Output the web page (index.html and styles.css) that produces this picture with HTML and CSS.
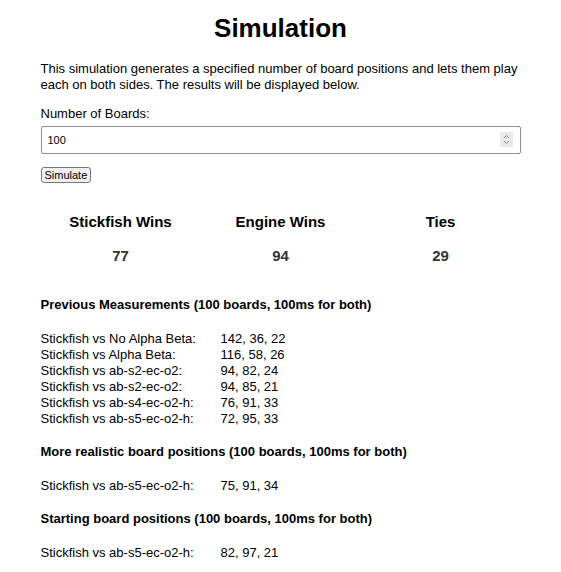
FILE: index.html
```html
<!DOCTYPE html>
<html>
<head>
<meta charset="utf-8">
<link rel="stylesheet" href="styles.css">
</head>
<body>
<main class="container">
  <h1 class="title">Simulation</h1>
  <p class="intro">This simulation generates a specified number of board positions and lets them play each on both sides. The results will be displayed below.</p>
  <label class="label" for="boards">Number of Boards:</label>
  <div class="input-wrap">
    <input id="boards" class="input" type="number" value="100">
    <span class="spinner" aria-hidden="true">
      <svg width="13" height="15" viewBox="0 0 13 15">
        <path d="M4 6 L6.5 3.5 L9 6" fill="none" stroke="#8a8a8a" stroke-width="1"/>
        <path d="M4 9 L6.5 11.5 L9 9" fill="none" stroke="#8a8a8a" stroke-width="1"/>
      </svg>
    </span>
  </div>
  <button class="btn">Simulate</button>

  <div class="stats">
    <div class="stat"><div class="stat-title">Stickfish Wins</div><div class="stat-value">77</div></div>
    <div class="stat"><div class="stat-title">Engine Wins</div><div class="stat-value">94</div></div>
    <div class="stat"><div class="stat-title">Ties</div><div class="stat-value">29</div></div>
  </div>

  <h3 class="section-title first">Previous Measurements (100 boards, 100ms for both)</h3>
  <div class="results">
    <div class="row"><span class="name">Stickfish vs No Alpha Beta:</span><span>142, 36, 22</span></div>
    <div class="row"><span class="name">Stickfish vs Alpha Beta:</span><span>116, 58, 26</span></div>
    <div class="row"><span class="name">Stickfish vs ab-s2-ec-o2:</span><span>94, 82, 24</span></div>
    <div class="row"><span class="name">Stickfish vs ab-s2-ec-o2:</span><span>94, 85, 21</span></div>
    <div class="row"><span class="name">Stickfish vs ab-s4-ec-o2-h:</span><span>76, 91, 33</span></div>
    <div class="row"><span class="name">Stickfish vs ab-s5-ec-o2-h:</span><span>72, 95, 33</span></div>
  </div>

  <h3 class="section-title">More realistic board positions (100 boards, 100ms for both)</h3>
  <div class="results">
    <div class="row"><span class="name">Stickfish vs ab-s5-ec-o2-h:</span><span>75, 91, 34</span></div>
  </div>

  <h3 class="section-title">Starting board positions (100 boards, 100ms for both)</h3>
  <div class="results">
    <div class="row"><span class="name">Stickfish vs ab-s5-ec-o2-h:</span><span>82, 97, 21</span></div>
  </div>
</main>
</body>
</html>
```

FILE: styles.css
```css
body {
  margin: 8px;
  font-family: "Liberation Sans", Arial, sans-serif;
  font-size: 13px;
  color: #000;
  background: #fff;
}
.container {
  max-width: 480px;
  margin: 0 auto;
}
.title {
  font-size: 26px;
  font-weight: bold;
  text-align: center;
  margin: 4px 0 17px;
  line-height: 32px;
}
.intro {
  margin: 0 0 13px;
  line-height: 16px;
}
.label {
  display: block;
  line-height: 16px;
  margin-bottom: 4px;
}
.input-wrap {
  position: relative;
  margin-bottom: 13px;
}
.input {
  display: block;
  box-sizing: border-box;
  width: 100%;
  height: 28px;
  border: 1px solid #8f8f9d;
  border-radius: 2px;
  padding: 0 6px;
  font-family: "Liberation Sans", Arial, sans-serif;
  font-size: 11px;
  -moz-appearance: textfield;
}
.input::-webkit-inner-spin-button,
.input::-webkit-outer-spin-button {
  -webkit-appearance: none;
  margin: 0;
}
.spinner {
  position: absolute;
  right: 8px;
  top: 6px;
  width: 13px;
  height: 15px;
  background: #e9e9ed;
  display: flex;
}
.btn {
  display: block;
  font-family: "Liberation Sans", Arial, sans-serif;
  font-size: 11px;
  line-height: 12px;
  padding: 1px 3px;
  border: 1px solid #767676;
  border-radius: 3px;
  background: #efefef;
}
.stats {
  display: grid;
  grid-template-columns: 1fr 1fr 1fr;
  text-align: center;
  margin-top: 30px;
}
.stat-title {
  font-size: 15px;
  font-weight: bold;
  line-height: 18px;
}
.stat-value {
  font-size: 15px;
  font-weight: bold;
  color: #333;
  margin-top: 16px;
  line-height: 18px;
}
.section-title {
  font-size: 13px;
  font-weight: bold;
  margin: 17px 0 18px;
  line-height: 16px;
}
.section-title.first {
  margin-top: 32px;
}
.row {
  display: flex;
  line-height: 16px;
}
.name {
  width: 180px;
}
```
